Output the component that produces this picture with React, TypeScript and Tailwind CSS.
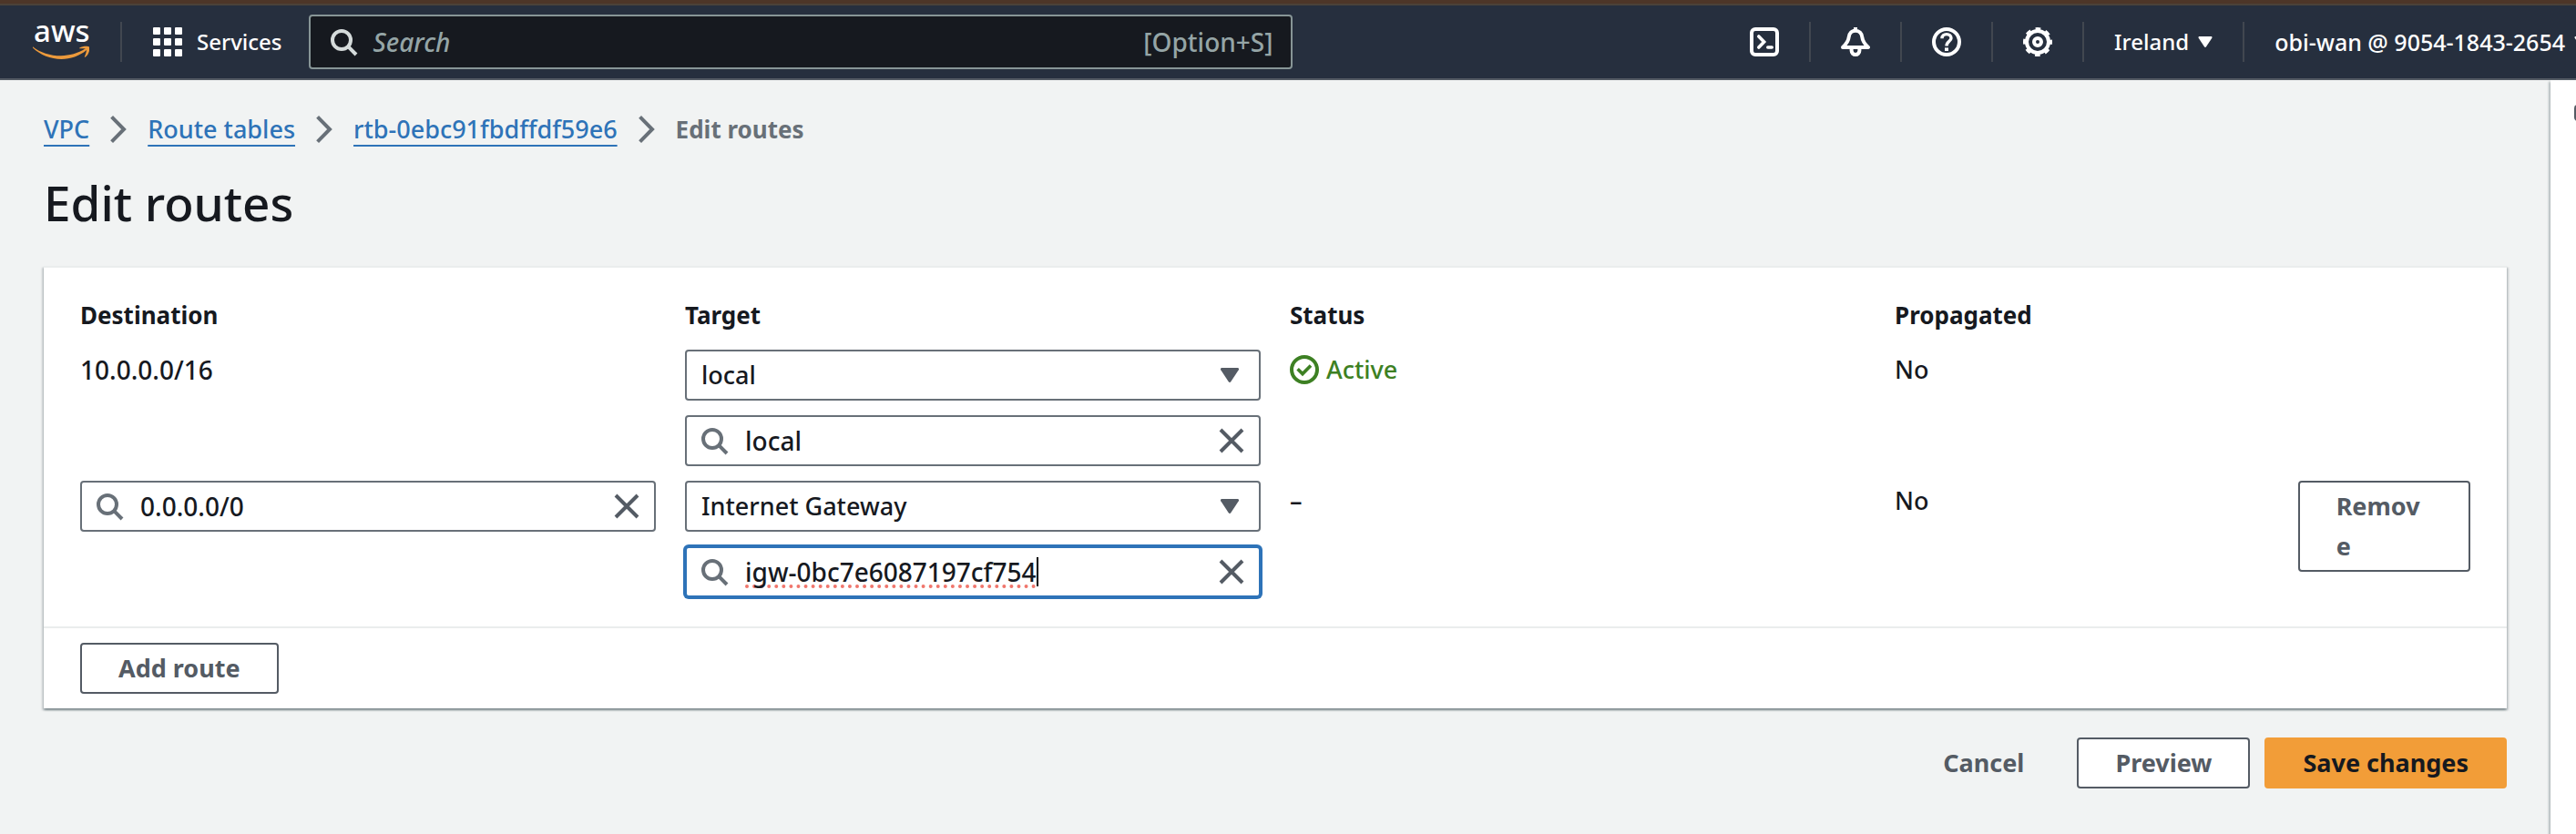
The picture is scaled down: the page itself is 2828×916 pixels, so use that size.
import React, { useState } from "react";

function SearchIcon({ className }: { className: string }) {
  return (
    <svg viewBox="0 0 16 16" className={className} fill="none" stroke="currentColor" strokeWidth="2" aria-hidden="true">
      <circle cx="7" cy="7" r="5" />
      <path d="M10.6 10.6 15 15" />
    </svg>
  );
}

function CaretIcon({ className }: { className: string }) {
  return (
    <svg viewBox="0 0 10 8" className={className} fill="currentColor" aria-hidden="true">
      <path d="M.8 0h8.4c.7 0 1 .6.7 1.1L5.700 7.500c-.4.6-1 .6-1.400 0L.1 1.100C-.2.6.1 0 .8 0z" />
    </svg>
  );
}

function CloseIcon() {
  return (
    <svg viewBox="0 0 16 16" className="size-8" fill="none" stroke="currentColor" strokeWidth="2" aria-hidden="true">
      <path d="M2 2 14 14M14 2 2 14" />
    </svg>
  );
}

function AwsLogo() {
  return (
    <svg viewBox="0 -16 62 72" className="h-[72px] w-[62px]" aria-hidden="true">
      <text x="1" y="20" fontSize="33" fontWeight="500" fill="#fff" fontFamily="'Noto Sans', 'Open Sans', sans-serif">
        aws
      </text>
      <path
        d="M.3 25.4C8 31.6 19 35.2 31 35.2c9 0 19-2.6 26.5-7.6 1.2-.8 2.4.6 1.2 1.6C51.5 35.3 41 38.9 31.5 38.9 19.5 38.9 8.2 34.3.2 26.7c-.6-.6-.5-1.7.1-1.3z"
        fill="#ec9a3c"
      />
      <path
        d="M51.4 26.5c3-2.2 9.6-2.300 10.700-1 1.100 1.400-.4 8.200-4.200 11.100-.7.5-1.300.2-1-.5 1-2.400 2.700-7 1.900-8.100-.9-1.100-4.900-.9-7-.7-.7.1-1-.4-.4-.8z"
        fill="#ec9a3c"
      />
    </svg>
  );
}

function GridIcon() {
  return (
    <svg viewBox="0 0 32 32" className="size-8" fill="currentColor" aria-hidden="true">
      {[0, 12, 24].map((y) => [0, 12, 24].map((x) => <rect key={`${x}-${y}`} x={x} y={y} width="8" height="8" rx="1" />))}
    </svg>
  );
}

function TerminalIcon() {
  return (
    <svg viewBox="0 0 16 16" className="size-8" fill="none" stroke="currentColor" strokeWidth="2" aria-hidden="true">
      <rect x="1" y="1" width="14" height="14" rx="2" />
      <path d="M4.9 5 7.8 8 4.9 11" strokeWidth="1.8" strokeLinecap="round" />
      <path d="M9.9 11h2.2" strokeLinecap="round" strokeWidth="1.8" />
    </svg>
  );
}

function BellIcon() {
  return (
    <svg viewBox="0 0 16 16" className="size-8" fill="none" stroke="currentColor" strokeWidth="2" strokeLinejoin="round" aria-hidden="true">
      <path d="M1 11C2.6 9.5 4.1 8 4.3 5.6 4.5 3.3 6 1.9 8 1.9s3.5 1.4 3.7 3.7C11.9 8 13.4 9.5 15 11z" />
      <path d="M5.8 11.5v1.3a2.2 2.2 0 0 0 4.4 0v-1.3" />
      <path d="M8 0v1.5" />
    </svg>
  );
}

function HelpIcon() {
  return (
    <svg viewBox="0 0 16 16" className="size-8" fill="none" stroke="currentColor" strokeWidth="2" aria-hidden="true">
      <circle cx="8" cy="8" r="7" />
      <path d="M5.5 6.1C5.5 4.6 6.5 3.8 8 3.8s2.5.9 2.5 2.2C10.5 7.7 8 7.7 8 10.3" strokeWidth="1.7" />
      <path d="M8 11.2v1.8" />
    </svg>
  );
}

function GearIcon() {
  return (
    <svg viewBox="0 0 16 16" className="size-8" fill="none" stroke="currentColor" strokeWidth="2" aria-hidden="true">
      <circle cx="8" cy="8" r="6" />
      <circle cx="8" cy="8" r="7.2" strokeWidth="1.6" strokeDasharray="2.83 2.825" strokeDashoffset="1.415" />
      <circle cx="8" cy="8" r="2" />
    </svg>
  );
}

function ChevronIcon() {
  return (
    <svg viewBox="0 0 16 16" className="size-8 text-[#687078]" fill="none" stroke="currentColor" strokeWidth="2" aria-hidden="true">
      <path d="M4.3 1.2 11 8 4.3 14.8" />
    </svg>
  );
}

function CheckCircleIcon() {
  return (
    <svg viewBox="0 0 16 16" className="size-8" fill="none" stroke="currentColor" strokeWidth="2" aria-hidden="true">
      <circle cx="8" cy="8" r="7" />
      <path d="M4.3 7.6 7 10.3 11.5 5.8" strokeWidth="1.8" />
    </svg>
  );
}

function Divider() {
  return <span className="h-11 w-0.5 shrink-0 bg-[#414750]" />;
}

function TopBar() {
  return (
    <header className="overflow-hidden border-b-2 border-[#545b64] bg-[#262f3e] text-white">
      <div className="h-1 bg-[#4d3628]" />
      <div className="h-0.5 bg-[#4b4239]" />
      <nav className="flex h-20 items-center pl-9 text-[24px]" aria-label="Global">
        <a href="#home" aria-label="AWS home" className="shrink-0">
          <AwsLogo />
        </a>
        <div className="ml-[34px] flex shrink-0 items-center gap-[34px]">
          <Divider />
          <button type="button" className="flex items-center gap-4">
            <GridIcon />
            Services
          </button>
        </div>
        <label className="ml-[30px] flex h-[60px] min-w-0 basis-[1080px] items-center gap-4 rounded-[4px] border-2 border-[#879596] bg-[#16191f] px-5 text-[28px]">
          <SearchIcon className="size-8 shrink-0 text-[#d5dbdb]" />
          <input
            type="search"
            aria-label="Search"
            placeholder="Search"
            className="min-w-0 flex-1 bg-transparent outline-none placeholder:text-[#95a5a6] placeholder:italic"
          />
          <span className="text-[#95a5a6]">[Option+S]</span>
        </label>
        <div className="-mr-[14px] ml-auto flex shrink-0 items-center gap-[33px] pl-8">
          <button type="button" aria-label="CloudShell">
            <TerminalIcon />
          </button>
          <Divider />
          <button type="button" aria-label="Notifications">
            <BellIcon />
          </button>
          <Divider />
          <button type="button" aria-label="Help">
            <HelpIcon />
          </button>
          <Divider />
          <button type="button" aria-label="Settings">
            <GearIcon />
          </button>
          <Divider />
          <button type="button" className="flex items-center gap-2.5">
            Ireland
            <CaretIcon className="h-3 w-4" />
          </button>
          <Divider />
          <button type="button" className="flex items-center gap-2.5 text-[25px] whitespace-nowrap">
            obi-wan @ 9054-1843-2654
            <CaretIcon className="h-3 w-4" />
          </button>
        </div>
      </nav>
    </header>
  );
}

function Breadcrumbs() {
  const links = ["VPC", "Route tables", "rtb-0ebc91fbdffdf59e6"];
  return (
    <nav aria-label="Breadcrumb">
      <ol className="flex items-center gap-4 text-[#687078]">
        {links.map((label) => (
          <li key={label} className="flex items-center gap-4">
            <a href="#" className="text-[#2e73b8] underline decoration-2 underline-offset-[7px]">
              {label}
            </a>
            <ChevronIcon />
          </li>
        ))}
        <li className="text-[26px] font-bold" aria-current="page">
          Edit routes
        </li>
      </ol>
    </nav>
  );
}

function SelectField({ label, initial }: { label: string; initial: string }) {
  return (
    <div className="relative">
      <select
        aria-label={label}
        defaultValue={initial}
        className="block h-14 w-full appearance-none rounded-[4px] border-2 border-[#687078] bg-white px-4"
      >
        <option>local</option>
        <option>Internet Gateway</option>
      </select>
      <CaretIcon className="pointer-events-none absolute top-5 right-6 h-4 w-5 text-[#545b64]" />
    </div>
  );
}

function SearchField({ label, initial, focused = false }: { label: string; initial: string; focused?: boolean }) {
  const [value, setValue] = useState(initial);
  const frame = focused ? "border-[#2e73b8] ring-2 ring-[#2e73b8]" : "border-[#687078]";
  const text = focused
    ? "field-sizing-content underline decoration-[#f0766c] decoration-dotted decoration-4 underline-offset-[3px] [text-decoration-skip-ink:none]"
    : "flex-1";
  return (
    <div className={`flex h-14 items-center rounded-[4px] border-2 bg-white px-3.5 ${frame}`}>
      <SearchIcon className="mr-[18px] size-8 shrink-0 text-[#687078]" />
      <input
        type="text"
        aria-label={label}
        value={value}
        spellCheck={false}
        onChange={(event) => setValue(event.target.value)}
        className={`min-w-0 bg-transparent text-[28px] outline-none ${text}`}
      />
      {focused && <span className="h-8 w-0.5 shrink-0 bg-black" />}
      <button type="button" aria-label={`Clear ${label}`} className="ml-auto shrink-0 text-[#545b64]" onClick={() => setValue("")}>
        <CloseIcon />
      </button>
    </div>
  );
}

const buttonBase = "min-h-14 rounded-[4px] border-2 px-10 py-1 text-[27px] leading-[44px] font-bold";
const normalButton = "border-[#545b64] bg-white text-[#545b64]";

function RoutesTable() {
  return (
    <table className="w-[calc(100%+32px)] table-fixed text-left">
      <colgroup>
        <col className="w-1/4" />
        <col className="w-1/4" />
        <col className="w-1/4" />
        <col className="w-1/6" />
        <col className="w-1/12" />
      </colgroup>
      <thead>
        <tr className="text-[26px]">
          <th scope="col">Destination</th>
          <th scope="col">Target</th>
          <th scope="col">Status</th>
          <th scope="col">Propagated</th>
          <td />
        </tr>
      </thead>
      <tbody className="[&_td]:pt-4 [&_td]:pr-8 [&_td]:align-top">
        <tr>
          <td className="text-[28px]">10.0.0.0/16</td>
          <td>
            <div className="flex flex-col gap-4">
              <SelectField label="Target type for 10.0.0.0/16" initial="local" />
              <SearchField label="target for 10.0.0.0/16" initial="local" />
            </div>
          </td>
          <td>
            <span className="flex items-center gap-2 text-[#3d8023]">
              <CheckCircleIcon />
              Active
            </span>
          </td>
          <td>No</td>
          <td />
        </tr>
        <tr>
          <td>
            <SearchField label="destination" initial="0.0.0.0/0" />
          </td>
          <td>
            <div className="flex flex-col gap-4">
              <SelectField label="Target type for 0.0.0.0/0" initial="Internet Gateway" />
              <SearchField label="target for 0.0.0.0/0" initial="igw-0bc7e6087197cf754" focused />
            </div>
          </td>
          <td>–</td>
          <td>No</td>
          <td>
            <button type="button" className={`${buttonBase} ${normalButton} w-full text-left break-all`}>
              Remove
            </button>
          </td>
        </tr>
      </tbody>
    </table>
  );
}

export default function App() {
  return (
    <div className="flex min-h-screen flex-col bg-[#f1f3f3] font-['Noto_Sans','Open_Sans',sans-serif] text-[27px] leading-[44px] font-medium text-[#16191f]">
      <TopBar />
      <div className="flex flex-1">
        <main className="min-w-0 flex-1 px-12 pt-8 pb-12">
          <Breadcrumbs />
          <h1 className="mt-6 mb-[34px] text-[53px] leading-[70px] font-medium">Edit routes</h1>
          <section className="border-t-2 border-[#eaeded] bg-white shadow-[0_2px_2px_rgba(0,28,36,0.3),2px_2px_2px_rgba(0,28,36,0.15),-2px_2px_2px_rgba(0,28,36,0.15)]">
            <div className="px-10 pt-[30px] pb-8">
              <RoutesTable />
            </div>
            <div className="flex border-t-2 border-[#eaeded] px-10 py-4">
              <button type="button" className={`${buttonBase} ${normalButton}`}>
                Add route
              </button>
            </div>
          </section>
          <div className="mt-8 flex justify-end gap-4">
            <button type="button" className={`${buttonBase} border-transparent text-[#545b64]`}>
              Cancel
            </button>
            <button type="button" className={`${buttonBase} ${normalButton}`}>
              Preview
            </button>
            <button type="button" className={`${buttonBase} border-[#f29d38] bg-[#f29d38] text-[#16191f]`}>
              Save changes
            </button>
          </div>
        </main>
        <aside className="w-7 shrink-0 overflow-hidden bg-white pt-[27px] shadow-[-2px_2px_2px_rgba(0,28,36,0.25)]">
          <button type="button" aria-label="Open help panel" className="ml-[26px] block h-[18px] w-8 rounded-[4px] bg-[#545b64]" />
        </aside>
      </div>
    </div>
  );
}
